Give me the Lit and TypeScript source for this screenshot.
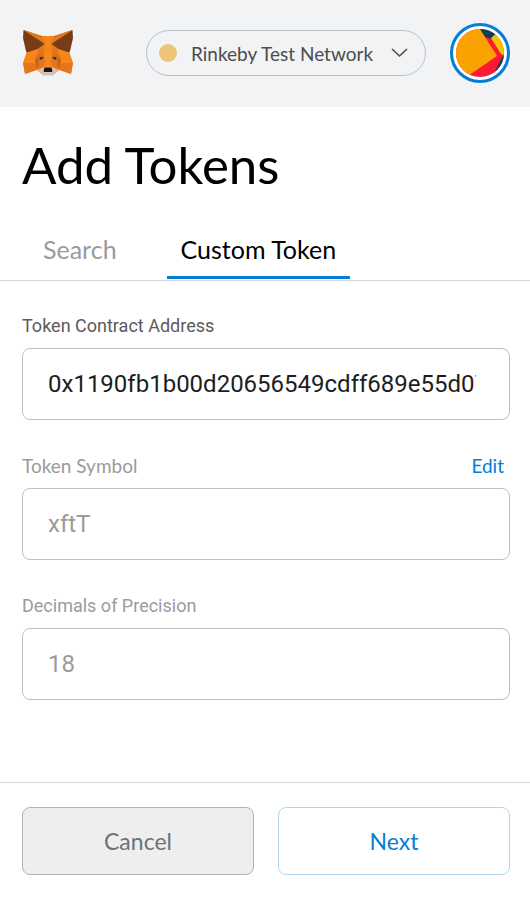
import { LitElement, html, css, svg } from "lit";
import { customElement, state } from "lit/decorators.js";
import { classMap } from "lit/directives/class-map.js";

/* Facets of the right half of the fox head; the left half mirrors them. */
const foxHalf = svg`
  <path fill="#f6851b" d="M0 6H6L24 0L21 22L25 33L23 44L11 40L5 45H0Z"/>
  <path fill="#e2761b" d="M24.500 0L6 6L3 14L12 12Z"/>
  <path fill="#763d16" d="M24.500 0L3.300 14L10 19L21.300 22.700L22.500 19L25 8Z"/>
  <path fill="#e4761b" d="M3.300 14L10 19L11 26L4 25Z"/>
  <path fill="#f6851b" d="M10 19L21.300 22.700L25 33H12.500Z"/>
  <path fill="#e4761b" d="M12.500 33H25L23 44L12 40Z"/>
  <path fill="#d96a16" d="M3.500 25.500L10 24.500L13 28L9 30.500L4 29Z"/>
  <path fill="#cd6116" d="M9 30L13 28.500L12.500 33L11 40L9 36Z"/>
  <path fill="#e4751f" d="M2 29L9 31L10 39L4.500 37Z"/>
  <path fill="#233447" d="M4.500 27.500L8 27L8.500 29.500L6 29.500Z"/>
  <path fill="#d7c1b3" d="M0 37.500H5L10 40L4.500 45.500H0Z"/>
  <path fill="#161616" d="M0 37.500H3.500L4.500 41L3.800 42H0Z"/>
`;

@customElement("app-root")
export class AppRoot extends LitElement {
  @state() private tab = "custom";

  static styles = css`
    :host {
      display: block;
      font-family: Lato, "Liberation Sans", sans-serif;
      color: #000;
      background: #fff;
    }
    * { box-sizing: border-box; }
    .bar {
      display: flex;
      align-items: center;
      justify-content: space-between;
      padding: 23px 20px 24px 22px;
      background: #f2f3f4;
    }
    .fox { display: block; width: 52px; height: 48px; }
    .account-area { display: flex; align-items: center; gap: 24px; }
    .network {
      position: relative;
      display: flex;
      align-items: center;
      width: 280px;
      height: 46px;
    }
    .network select {
      appearance: none;
      width: 100%;
      height: 100%;
      padding: 0 44px;
      border: 1px solid #bbc0c5;
      border-radius: 24px;
      background: transparent;
      color: #4d4d4d;
      font: 19px Lato, "Liberation Sans", sans-serif;
    }
    .dot {
      position: absolute;
      left: 13px;
      width: 18px;
      height: 18px;
      border-radius: 50%;
      background: #ecc577;
    }
    .chevron { position: absolute; right: 18px; width: 17px; height: 10px; pointer-events: none; }
    .account {
      width: 60px;
      height: 60px;
      padding: 3px;
      border: 3px solid #037dd6;
      border-radius: 50%;
      background: #fff;
    }
    .account svg { display: block; width: 48px; height: 48px; border-radius: 50%; }
    h1 { margin: 0; padding: 28px 22px 0; font-size: 51px; line-height: 60px; font-weight: 400; }
    .tabs {
      display: flex;
      gap: 36px;
      margin-top: 28px;
      padding: 0 29px 1px;
      border-bottom: 1px solid #d2d8dd;
    }
    .tab {
      height: 56px;
      padding: 0 14px 2px;
      border: 0;
      border-bottom: 3px solid transparent;
      background: none;
      color: #9b9b9b;
      font: 25px Lato, "Liberation Sans", sans-serif;
    }
    .tab.selected { color: #000; border-color: #037dd6; }
    .fields { display: grid; gap: 32px; padding: 31px 20px 82px 22px; }
    .label-row {
      display: flex;
      justify-content: space-between;
      align-items: center;
      height: 26px;
      margin-bottom: 10px;
      padding-right: 6px;
      color: #5b5b5b;
      font: 18px Roboto, sans-serif;
    }
    .muted { color: #9b9b9b; }
    .euclid { font: 19px Lato, sans-serif; }
    .edit { padding: 0; border: 0; background: none; color: #037dd6; font: 19px Lato, sans-serif; }
    .field input {
      display: block;
      width: 100%;
      height: 72px;
      padding: 0 33px 0 25px;
      border: 1px solid #bbc0c5;
      border-radius: 8px;
      background: #fff;
      color: #1d1d1d;
      font: 24px Roboto, sans-serif;
    }
    .field input:disabled { color: #9b9b9b; }
    .footer {
      display: grid;
      grid-template-columns: 1fr 1fr;
      gap: 24px;
      padding: 24px 20px 23px 22px;
      border-top: 1px solid #d2d8dd;
    }
    .action {
      height: 68px;
      border-radius: 8px;
      font: 23px Lato, "Liberation Sans", sans-serif;
    }
    .cancel { border: 1px solid #b2b2b2; background: #eee; color: #6a737d; }
    .next { border: 1px solid #b0d7f2; background: #fff; color: #037dd6; }
  `;

  private renderTab(id: string, text: string) {
    return html`<button
      type="button"
      role="tab"
      aria-selected=${this.tab === id ? "true" : "false"}
      class=${classMap({ tab: true, selected: this.tab === id })}
      @click=${() => (this.tab = id)}
    >${text}</button>`;
  }

  render() {
    return html`
      <header class="bar">
        <svg class="fox" viewBox="-26 -1 52 48" aria-hidden="true">
          <g>${foxHalf}</g>
          <g transform="scale(-1 1)">${foxHalf}</g>
        </svg>
        <div class="account-area">
          <div class="network">
            <span class="dot"></span>
            <select aria-label="Network"><option>Rinkeby Test Network</option></select>
            <svg class="chevron" viewBox="0 0 17 10" aria-hidden="true">
              <path d="M1 1L8.5 8L16 1" fill="none" stroke="#4d4d4d" stroke-width="1.6"/>
            </svg>
          </div>
          <button class="account" aria-label="Account">
            <svg viewBox="0 0 48 48" aria-hidden="true">
              <path fill="#fc1937" d="M0 0H48V48H0Z"/>
              <path fill="#073f59" d="M22 0H44L36 10L26 7Z"/>
              <path fill="#f3c500" d="M35 9L42 3H48V27L45 25Z"/>
              <path fill="#073f59" d="M48 25L38 44L48 48Z"/>
              <path fill="#faa300" d="M0 0H24L41 27L12 47L0 48Z"/>
            </svg>
          </button>
        </div>
      </header>
      <main>
        <h1>Add Tokens</h1>
        <div class="tabs" role="tablist">
          ${this.renderTab("search", "Search")}
          ${this.renderTab("custom", "Custom Token")}
        </div>
        <form @submit=${(e: Event) => e.preventDefault()}>
          <div class="fields">
            <div class="field">
              <div class="label-row"><label for="address">Token Contract Address</label></div>
              <input id="address" value="0x1190fb1b00d20656549cdff689e55d07" />
            </div>
            <div class="field">
              <div class="label-row">
                <label class="muted euclid" for="symbol">Token Symbol</label>
                <button class="edit" type="button">Edit</button>
              </div>
              <input id="symbol" value="xftT" disabled />
            </div>
            <div class="field">
              <div class="label-row"><label class="muted" for="decimals">Decimals of Precision</label></div>
              <input id="decimals" value="18" disabled />
            </div>
          </div>
          <footer class="footer">
            <button class="action cancel" type="button">Cancel</button>
            <button class="action next">Next</button>
          </footer>
        </form>
      </main>
    `;
  }
}
